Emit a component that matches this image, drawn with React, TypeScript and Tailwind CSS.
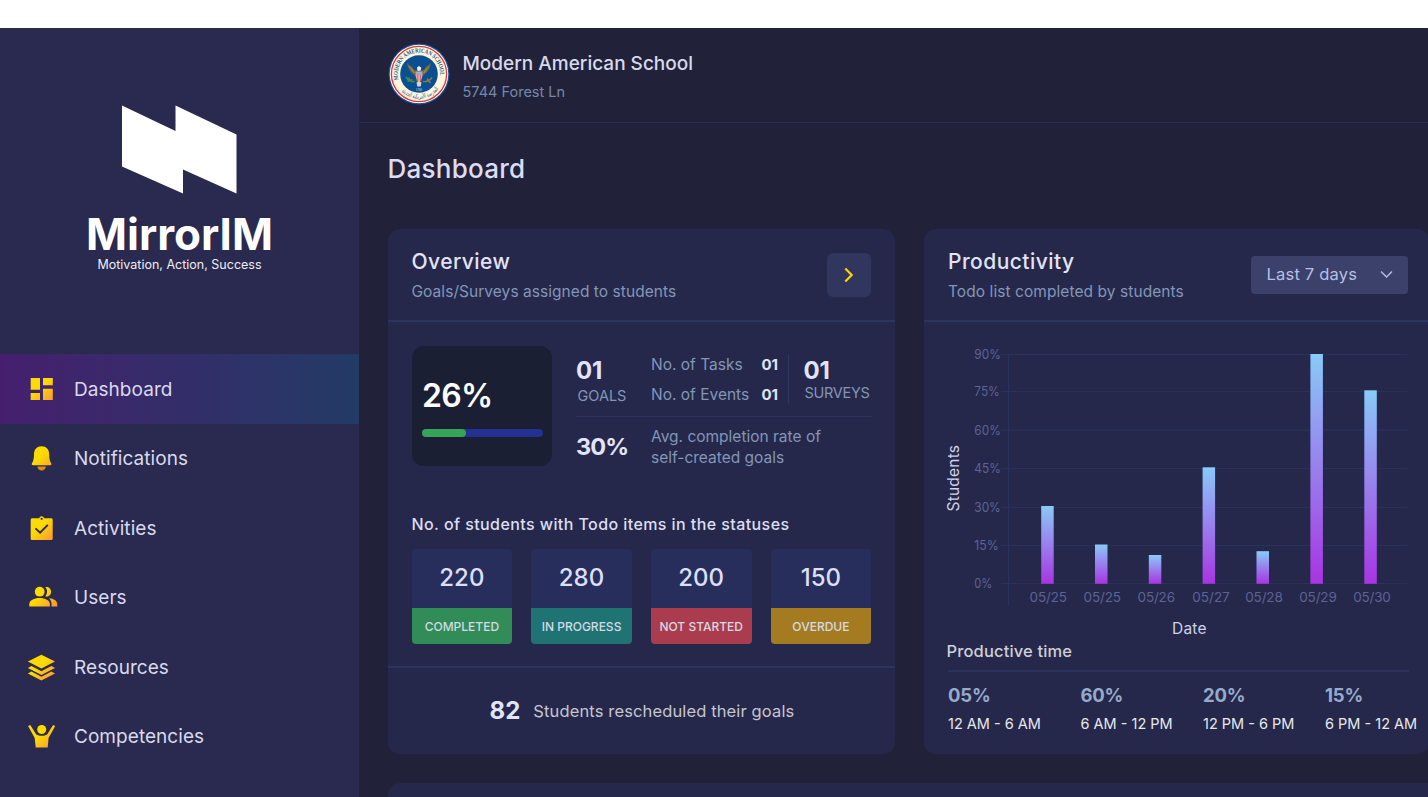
import React from "react";

function Grad({ id }: { id: string }) {
  return (
    <defs>
      <linearGradient id={id} x1="6" y1="5" x2="26" y2="27" gradientUnits="userSpaceOnUse">
        <stop offset="0.35" stopColor="#fddb00" />
        <stop offset="1" stopColor="#fb923c" />
      </linearGradient>
    </defs>
  );
}

function NavIcon({ name }: { name: string }) {
  const id = "grad-" + name;
  const f = `url(#${id})`;
  return (
    <svg className="mb-[2px] block h-7 w-8 shrink-0" viewBox="0 0 32 28">
      <Grad id={id} />
      {name === "dashboard" && (
        <path fill={f} d="M3.700 3H13v11.700H3.700zM3.700 18H13v7H3.700zM16 3h9.800v7.300H16zM16 13.700h9.800V25H16z" />
      )}
      {name === "notifications" && (
        <>
          <path fill="#d98e0c" d="M10.300 22.500h8.700c-.6 2.600-2.200 3.900-4.350 3.900s-3.800-1.300-4.350-3.900z" />
          <path
            fill={f}
            d="M14.600 2.200c4.600 0 7.600 3.300 7.600 7.800 0 4.600.6 6.800 2 9.200.6 1.100.1 2-1 2H6c-1.100 0-1.600-.9-1-2 1.400-2.400 2-4.600 2-9.200 0-4.500 3-7.800 7.600-7.800z"
          />
        </>
      )}
      {name === "activities" && (
        <>
          <path
            fill={f}
            fillRule="evenodd"
            d="M5.300 4.300h6.900a2.500 2.500 0 0 1 4.900 0h7c.9 0 1.600.7 1.600 1.600v18.500c0 .9-.7 1.600-1.600 1.600H5.300c-.9 0-1.600-.7-1.600-1.600V5.900c0-.9.7-1.600 1.600-1.600zM14.650 3.700a1.100 1.100 0 1 0 0 2.200 1.100 1.100 0 0 0 0-2.200z"
          />
          <path d="M8.500 14.400l4.600 4.300 7.700-7.900" fill="none" stroke="#2a294f" strokeWidth="1.900" />
        </>
      )}
      {name === "users" && (
        <>
          <circle cx="12.700" cy="8.700" r="4.900" fill={f} />
          <path fill={f} d="M18.200 4.100c3.200-.9 5.900 1.400 5.900 4.600s-2.700 5.500-5.900 4.600c2.500-2.700 2.500-6.500 0-9.200z" />
          <path fill={f} d="M2.300 23.400v-2.200c0-3.800 4.800-6.100 10.300-6.100S22.900 17.400 22.900 21.200v2.200z" />
          <path fill={f} d="M22 15.200c4.900.4 8.300 2.500 8.300 6v2.200h-5.700v-2.200c0-2.400-.9-4.500-2.600-6z" />
        </>
      )}
      {name === "resources" && (
        <path
          fill={f}
          d="M14.400 1.700L28 8.600 14.400 15.600.9 8.600zM.9 14.900L4.400 13l10 5.200 10-5.200 3.600 1.900-13.600 7zM.9 20.400l3.500-1.900 10 5.200 10-5.200 3.600 1.900-13.600 7z"
        />
      )}
      {name === "competencies" && (
        <>
          <circle cx="14.700" cy="7.500" r="4.500" fill={f} />
          <path
            fill={f}
            d="M1.100 4.100L3.200 2.900 9.100 12.200c3.300 2 7.900 2 11.200 0L26.100 2.900l2.100 1.200-6.600 11.900-.9 9.500H8.700l-1-9.500z"
          />
        </>
      )}
    </svg>
  );
}

const nav = [
  { icon: "dashboard", label: "Dashboard", active: true },
  { icon: "notifications", label: "Notifications" },
  { icon: "activities", label: "Activities" },
  { icon: "users", label: "Users" },
  { icon: "resources", label: "Resources" },
  { icon: "competencies", label: "Competencies" },
];

function Sidebar() {
  return (
    <aside className="flex h-full w-[359px] shrink-0 flex-col bg-[#2a294f]">
      <div className="flex h-[326px] flex-col items-center pt-[77px]">
        <svg className="block h-[90px] w-[116px]" viewBox="122 105 116 90">
          <path fill="#fff" d="M122 105.500l53.500 25.500V105.500l61 29v59L183 169.500v24L122 166.500z" />
        </svg>
        <div className="mt-[17px] text-[44px] leading-[44px] font-bold text-white">MirrorIM</div>
        <div className="mt-[1px] text-[12.500px] leading-[16px] text-[#eeeef4]">Motivation, Action, Success</div>
      </div>
      <nav className="flex flex-col">
        {nav.map((n) => (
          <a
            key={n.label}
            className={
              "flex h-[69.500px] items-center gap-[15px] pt-[2px] pl-[27px] " +
              (n.active ? "bg-linear-to-r from-[#451f6e] via-[#332d69] to-[#223b66]" : "")
            }
          >
            <NavIcon name={n.icon} />
            <span className="text-[19px] leading-6 tracking-[0.050px] text-[#d9d9ee]">{n.label}</span>
          </a>
        ))}
      </nav>
    </aside>
  );
}

function Seal() {
  return (
    <svg className="block h-[62px] w-[62px]" viewBox="0 0 62 62">
      <defs>
        <path id="sealTop" d="M10.600 36.500A21.200 21.200 0 1 1 51.400 36.500" />
        <path id="sealBottom" d="M8.500 41A24.600 24.600 0 0 0 53.500 41" />
      </defs>
      <circle cx="31" cy="31" r="30.500" fill="#0c5796" />
      <circle cx="31" cy="31" r="29.300" fill="#fff" />
      <circle cx="31" cy="31" r="27.600" fill="#fdf6dc" stroke="#ee2f38" strokeWidth="1.300" />
      <circle cx="31" cy="31" r="18.800" fill="#0a4f92" />
      <text fontSize="6.200" fill="#24588a" fontFamily="Liberation Serif, serif" fontWeight="700">
        <textPath href="#sealTop" textLength="74" lengthAdjust="spacingAndGlyphs">MODERN AMERICAN SCHOOL</textPath>
      </text>
      <text fontSize="6.500" fill="#3b668c" fontFamily="DejaVu Sans, sans-serif">
        <textPath href="#sealBottom" startOffset="9" textLength="42" lengthAdjust="spacingAndGlyphs">المدرسة الأمريكية الحديثة</textPath>
      </text>
      <path
        fill="#76643c"
        d="M19 19.500c.3 4.500 2.500 9 6.500 12l3.500 2-1.500 4 3.500 2.500 3.500-2.500-1.500-4 3.500-2c4-3 6.200-7.500 6.500-12-1.500 2.500-3 3.500-5 4l-.8 2.500-3.200 1.500-3-3-3 3-3.200-1.500-.8-2.500c-2-.5-3.500-1.500-5-4z"
      />
      <path d="M21 23l5 7M23.500 25l3 5M41 23l-5 7M38.500 25l-3 5" stroke="#a98d4a" strokeWidth=".8" />
      <path fill="#eef1f5" d="M29 24.500l2-1.500 2.300 1.700-.8 3h-3z" />
      <path fill="#8fb3dc" d="M27.500 28.500h7v3h-7z" />
      <path fill="#e8a3a8" d="M27.500 31.300h7c0 3.500-1.200 6-3.500 7.700-2.300-1.700-3.500-4.200-3.500-7.700z" />
      <path d="M29.600 31.500v6M32.400 31.500v6" stroke="#c9545c" strokeWidth=".7" />
      <path d="M18 34c2.500 4 5.500 5 9 4.500M19.500 38.500l5-2M20.500 34.500l2 4" fill="none" stroke="#3f8a4e" strokeWidth="1.500" />
      <path d="M44 34.500c-2.500 3.500-5.500 4.500-9 4M39 35.500l3.500 4.500" fill="none" stroke="#8f7a45" strokeWidth="1.400" />
      <path fill="#d9d4cc" d="M28.500 39.500l2.500-1.500 2.500 1.500-.8 4h-3.400z" />
      <text x="31" y="48.300" fontSize="3.200" textAnchor="middle" fill="#c8d6e2" fontFamily="Liberation Serif, serif">1986</text>
    </svg>
  );
}

const tiles = [
  { value: "220", label: "COMPLETED", color: "bg-[#318c57]" },
  { value: "280", label: "IN PROGRESS", color: "bg-[#207373]" },
  { value: "200", label: "NOT STARTED", color: "bg-[#ab3c4e]" },
  { value: "150", label: "OVERDUE", color: "bg-[#a57b22]" },
];

function Overview() {
  return (
    <section className="flex h-[525.500px] w-[507.500px] shrink-0 flex-col rounded-xl bg-[#25284a]">
      <header className="flex h-[93px] shrink-0 items-start justify-between border-b-2 border-[#2c355f] px-6 pt-6">
        <div>
          <h2 className="-mt-[2.500px] text-[21px] leading-6 font-[450] tracking-[0.450px] text-[#e3e3f6]">Overview</h2>
          <p className="mt-[8px] text-[15.500px] leading-5 tracking-[0.050px] text-[#8396b8]">Goals/Surveys assigned to students</p>
        </div>
        <button className="flex h-[44.500px] w-[44.500px] items-center justify-center rounded-md bg-[#30365d]">
          <svg className="block h-4 w-[10px]" viewBox="0 0 10 16">
            <path d="M1.300 1.500L7.700 8l-6.400 6.500" fill="none" stroke="#fbd40b" strokeWidth="2.200" />
          </svg>
        </button>
      </header>

      <div className="flex h-[144px] shrink-0 pt-[24.500px] pl-6">
        <div className="flex h-[119.500px] w-[140.500px] shrink-0 flex-col rounded-xl bg-[#1a1f34] pt-[30px] pl-[10.500px]">
          <div className="text-[32px] leading-10 font-semibold tracking-[-0.700px] text-white">26%</div>
          <div className="mt-[13px] h-[7.500px] w-[120.500px] shrink-0 rounded-full bg-[#243193]">
            <div className="h-full w-[43.500px] rounded-full bg-[#37a356]" />
          </div>
        </div>

        <div className="ml-[23.500px] flex w-[296px] flex-col">
          <div className="flex h-[70.500px] shrink-0 border-b-[1.500px] border-[#2c355f]">
            <div className="w-[75.500px] pt-[13px] pl-[0.500px]">
              <div className="text-[24px] leading-6 font-bold tracking-[-0.300px] text-[#e1e4fb]">01</div>
              <div className="mt-[3px] pl-[1.500px] text-[14.500px] leading-5 text-[#8396b8]">GOALS</div>
            </div>
            <div className="flex w-[127px] flex-col gap-[10px] pt-[9px] text-[15.500px] leading-5 text-[#8396b8]">
              <div className="flex justify-between">
                No. of Tasks<b className="text-[15px] tracking-normal text-[#e1e4fb]">01</b>
              </div>
              <div className="flex justify-between">
                No. of Events<b className="text-[15px] tracking-normal text-[#e1e4fb]">01</b>
              </div>
            </div>
            <div className="mt-[9px] ml-[10px] h-[49px] w-px bg-[#2f3863]" />
            <div className="ml-[14.500px] pt-[13px]">
              <div className="text-[24px] leading-6 font-bold tracking-[-0.300px] text-[#e1e4fb]">01</div>
              <div className="pl-[1px] text-[14.500px] leading-5 tracking-[-0.300px] text-[#8396b8]">SURVEYS</div>
            </div>
          </div>
          <div className="flex pt-[9px]">
            <div className="w-[75.500px] pt-[9px] pl-[0.500px] text-[23.500px] leading-6 font-bold tracking-[-0.900px] text-[#e1e4fb]">30%</div>
            <div className="text-[15.500px] leading-[21.600px] whitespace-nowrap text-[#8396b8]">
              Avg. completion rate of
              <br />
              self-created goals
            </div>
          </div>
        </div>
      </div>

      <div className="flex h-[202.500px] shrink-0 flex-col border-b-2 border-[#2c355f] px-6 pt-[46.500px]">
        <h3 className="text-[16px] leading-6 font-medium tracking-[0.420px] text-[#dcdef4]">
          No. of students with Todo items in the statuses
        </h3>
        <div className="mt-[13px] flex gap-[19px]">
          {tiles.map((t) => (
            <div key={t.label} className="flex w-[100.700px] shrink-0 flex-col overflow-hidden rounded">
              <div className="flex h-[59px] items-center justify-center bg-[#272e5b] pb-[2px] text-[24px] font-medium text-[#dcdff8]">
                {t.value}
              </div>
              <div className={"flex h-9 items-center justify-center pt-[2px] text-[12px] font-medium text-[#d3dae6] " + t.color}>
                {t.label}
              </div>
            </div>
          ))}
        </div>
      </div>

      <div className="flex grow items-center justify-center gap-[13px] pl-[1.500px]">
        <span className="text-[24px] leading-6 font-bold text-[#e1e4fb]">82</span>
        <span className="text-[16.500px] leading-6 tracking-[0.130px] text-[#c5c6cf]">Students rescheduled their goals</span>
      </div>
    </section>
  );
}

const yTicks = [
  { label: "90%", y: 354.5, w: 26.5 },
  { label: "75%", y: 391.5, w: 25.5 },
  { label: "60%", y: 430, w: 26.5 },
  { label: "45%", y: 468.5, w: 26.5 },
  { label: "30%", y: 507.5, w: 26.5 },
  { label: "15%", y: 545.5, w: 24.5 },
  { label: "0%", y: 583.5, w: 18 },
];

const bars = [
  { label: "05/25", x: 1041.2, top: 506, lx: 1048.3 },
  { label: "05/25", x: 1095, top: 544.5, lx: 1102.3 },
  { label: "05/26", x: 1148.8, top: 555, lx: 1156.3 },
  { label: "05/27", x: 1202.6, top: 467.3, lx: 1211 },
  { label: "05/28", x: 1256.5, top: 551.2, lx: 1264 },
  { label: "05/29", x: 1310.4, top: 354, lx: 1318 },
  { label: "05/30", x: 1364.3, top: 390.3, lx: 1372 },
];

function Chart() {
  return (
    <svg className="block h-[318px] w-[504px] shrink-0" viewBox="924 322 504 318" fontFamily="Inter, sans-serif">
      <defs>
        <linearGradient id="bar" x1="0" y1="0" x2="0" y2="1">
          <stop offset="0" stopColor="#89caf8" />
          <stop offset="1" stopColor="#a834e2" />
        </linearGradient>
      </defs>
      <path d="M1008.500 354V605.500" stroke="#2b3260" strokeWidth="1" />
      {yTicks.map((t) => (
        <g key={t.label}>
          <path d={`M1001 ${t.y}H1407.500`} stroke="#2a325c" strokeWidth="1" />
          <text x="974.300" y={t.y + 4.9} fontSize="13.500" fill="#5e6297" textLength={t.w} lengthAdjust="spacingAndGlyphs">
            {t.label}
          </text>
        </g>
      ))}
      {bars.map((b, i) => (
        <g key={i}>
          <rect x={b.x} y={b.top} width="12.500" height={583.8 - b.top} fill="url(#bar)" />
          <text x={b.lx} y="602.200" fontSize="13.500" textAnchor="middle" fill="#5e6297" textLength="37.500">{b.label}</text>
        </g>
      ))}
      <text x="1172" y="634" fontSize="15.500" fill="#cfd1e8" textLength="34.500">Date</text>
      <text transform="translate(959 511.500) rotate(-90)" fontSize="15.500" fill="#cfd1e8" textLength="66.500">Students</text>
    </svg>
  );
}

const times = [
  { pct: "05%", range: "12 AM - 6 AM", w: "w-[132.500px]" },
  { pct: "60%", range: "6 AM - 12 PM", w: "w-[122.500px]" },
  { pct: "20%", range: "12 PM - 6 PM", w: "w-[122px]" },
  { pct: "15%", range: "6 PM - 12 AM", w: "w-[95px]" },
];

function Productivity() {
  return (
    <section className="flex h-[525.500px] w-[505px] shrink-0 flex-col rounded-xl bg-[#25284a]">
      <header className="flex h-[93px] shrink-0 items-start justify-between border-b-2 border-[#2c355f] pt-6 pr-[21px] pl-6">
        <div>
          <h2 className="-mt-[2.500px] pl-[0.500px] text-[21px] leading-6 font-[450] tracking-[0.450px] text-[#e3e3f6]">Productivity</h2>
          <p className="mt-[8px] pl-[0.500px] text-[15.500px] leading-5 tracking-[0.070px] text-[#8396b8]">Todo list completed by students</p>
        </div>
        <button className="mt-[3.500px] flex h-[37.500px] w-[157px] items-center justify-between rounded bg-[#3b416b] pr-[15px] pl-[16px] text-[16.500px] tracking-[0.200px] text-[#b9bfe2]">
          Last 7 days
          <svg className="block h-[9px] w-[13px]" viewBox="0 0 13 9">
            <path d="M1 1.500l5.500 5.500L12 1.500" fill="none" stroke="#b9bfe2" strokeWidth="1.400" />
          </svg>
        </button>
      </header>
      <Chart />
      <div className="mr-[20px] ml-6 flex h-[32px] shrink-0 border-b-2 border-[#2a325b]">
        <h3 className="-ml-[1px] text-[16.500px] leading-[22px] font-medium tracking-[0.150px] text-[#cfcfd8]">Productive time</h3>
      </div>
      <div className="flex pt-[11px] pl-[24.500px]">
        {times.map((t) => (
          <div key={t.pct} className={"shrink-0 " + t.w}>
            <div className="text-[18.500px] leading-6 font-bold tracking-[-0.200px] text-[#96aacb]">{t.pct}</div>
            <div className="mt-[7px] text-[14.500px] leading-5 whitespace-nowrap text-[#e8e8ec]">{t.range}</div>
          </div>
        ))}
      </div>
    </section>
  );
}

export default function App() {
  return (
    <div className="h-[797px] w-[1428px] overflow-hidden bg-white pt-[28px] font-['Inter',sans-serif]">
      <div className="flex h-[768.500px] overflow-hidden bg-[#212239]">
        <Sidebar />
        <main className="flex min-w-0 flex-1 flex-col">
          <header className="flex h-[95px] shrink-0 items-start border-b border-[#272c58] pt-[15px] pl-[28.500px]">
            <Seal />
            <div className="pt-[9px] pl-[13px]">
              <div className="text-[19px] leading-6 font-medium text-[#d9d9ee]">Modern American School</div>
              <div className="mt-[6px] text-[14.500px] leading-5 text-[#7488ab]">5744 Forest Ln</div>
            </div>
          </header>
          <div className="flex h-[105.500px] shrink-0 items-start pt-[29.500px] pl-[28.500px]">
            <h1 className="text-[26px] leading-8 font-[450] tracking-[0.250px] text-[#dcdcf2]">Dashboard</h1>
          </div>
          <div className="flex gap-[28.500px] pl-[28.500px]">
            <Overview />
            <Productivity />
          </div>
          <div className="mt-[29px] ml-[28.500px] h-10 w-[1100px] shrink-0 rounded-xl bg-[#25284a]" />
        </main>
      </div>
    </div>
  );
}
